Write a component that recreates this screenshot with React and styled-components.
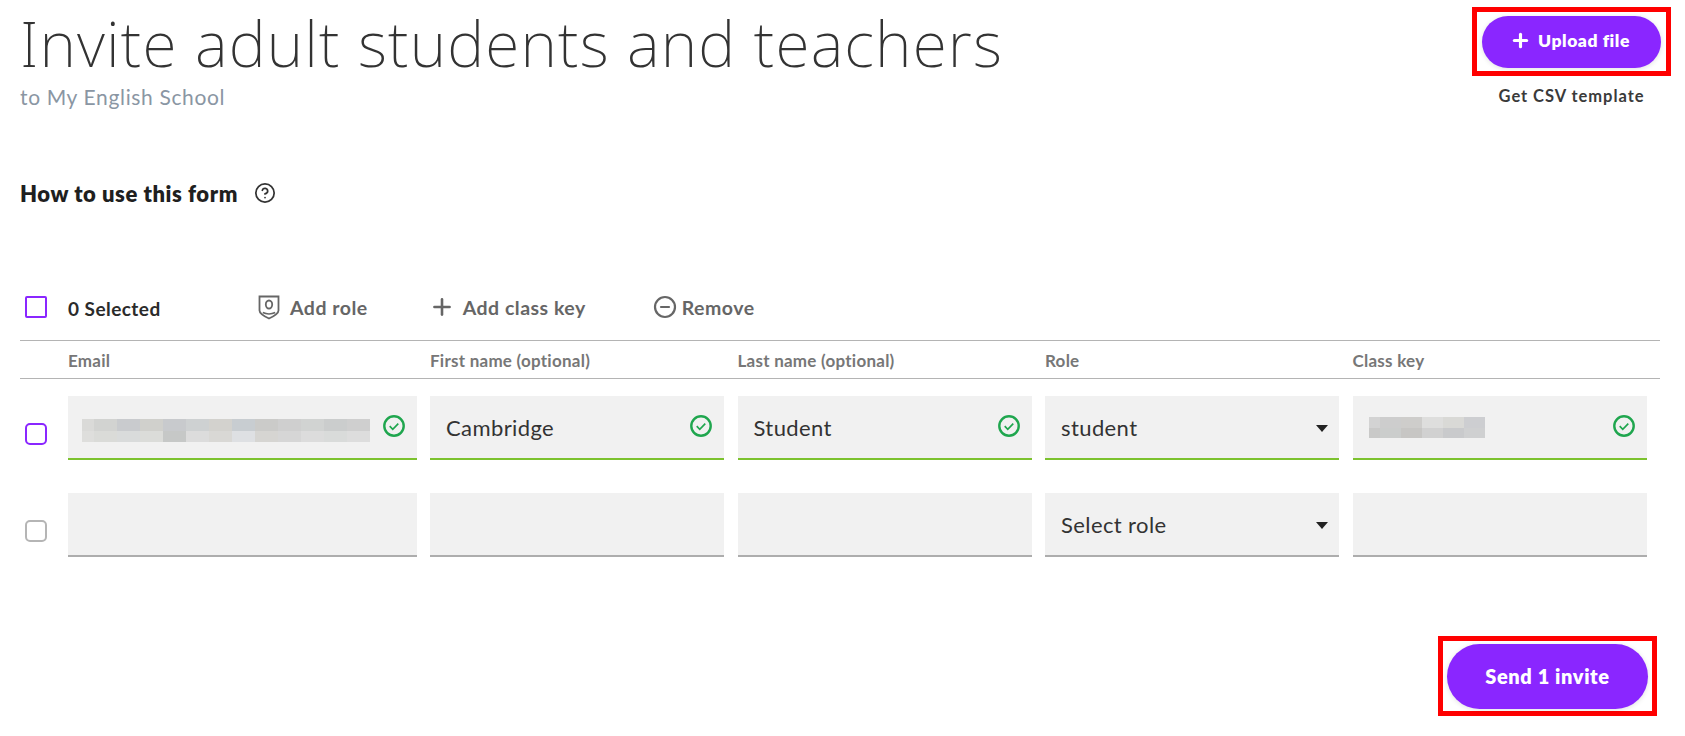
import React from "react";
import styled, { createGlobalStyle } from "styled-components";
import { Plus, CircleMinus, CircleHelp } from "lucide-react";

const Global = createGlobalStyle`
  html, body { margin: 0; background: #fff; }
  body { font-family: "Lato", "Noto Sans", sans-serif; color: #333; }
  * { box-sizing: border-box; }
`;

const Page = styled.div`
  width: 1685px;
  height: 736px;
  overflow: hidden;
  padding: 7px 14px 0 20px;
`;
const Header = styled.header`
  display: flex;
  justify-content: space-between;
  align-items: flex-start;
`;
const Title = styled.h1`
  margin: 0;
  font-family: "Noto Sans", sans-serif;
  font-weight: 200;
  font-size: 62.5px;
  line-height: 72px;
  letter-spacing: 1.15px;
  color: #333;
  white-space: nowrap;
`;
const Subtitle = styled.div`
  margin-top: 4px;
  font-size: 21px;
  line-height: 28px;
  letter-spacing: 0.65px;
  color: #8a96a3;
`;
const UploadColumn = styled.div`
  display: flex;
  flex-direction: column;
  align-items: center;
`;
const Annotation = styled.div`
  border: 5px solid #ff0000;
  padding: ${p => p.$padding};
  display: flex;
`;
const PrimaryButton = styled.button`
  display: flex;
  align-items: center;
  justify-content: center;
  width: ${p => p.$w}px;
  height: ${p => p.$h}px;
  padding: 0 ${p => p.$nudge}px ${p => p.$lift}px 0;
  border: 0;
  border-radius: 34px;
  background: #8a26ff;
  color: #fff;
  font-family: inherit;
  font-weight: 800;
  font-size: ${p => p.$size}px;
  letter-spacing: ${p => p.$spacing}px;
  gap: 7px;
  box-shadow: 0 1px 5px rgba(0, 0, 0, 0.12);
`;
const TemplateLink = styled.a`
  margin-top: 8px;
  font-size: 16.5px;
  line-height: 24px;
  font-weight: 700;
  letter-spacing: 0.95px;
  color: #3a3a3a;
`;
const HelpRow = styled.div`
  display: flex;
  align-items: center;
  gap: 16px;
  margin-top: 71px;
  height: 22px;
  font-size: 22px;
  font-weight: 800;
  letter-spacing: 0.55px;
  color: #1f1f1f;
`;
const Toolbar = styled.div`
  display: flex;
  align-items: center;
  height: 53px;
  margin-top: 83px;
  padding: 0 0 13px 5px;
`;
const SelectedLabel = styled.span`
  width: 190px;
  padding-top: 2px;
  font-size: 19px;
  font-weight: 700;
  letter-spacing: 0.45px;
  color: #2b2b2b;
`;
const ToolButton = styled.button`
  display: flex;
  align-items: center;
  gap: ${p => p.$gap}px;
  margin-right: ${p => p.$after}px;
  padding: 0;
  border: 0;
  background: none;
  font-family: inherit;
  font-size: 19.5px;
  font-weight: 700;
  letter-spacing: 0.5px;
  color: #666;
`;
const Table = styled.div`
  margin-right: 11px;
`;
const ColumnGrid = styled.div`
  display: grid;
  grid-template-columns: 348.5px repeat(4, 294px);
  column-gap: 13.5px;
`;
const HeaderRow = styled(ColumnGrid)`
  height: 39px;
  align-items: center;
  padding: 2px 0 0 48px;
  border-top: 1px solid #b4b4b4;
  border-bottom: 1px solid #b4b4b4;
  font-size: 17px;
  font-weight: 700;
  letter-spacing: 0.25px;
  color: #777;
`;
const Row = styled.div`
  display: flex;
  align-items: center;
  margin-top: ${p => p.$top}px;
  padding-left: 5px;
`;
const Checkbox = styled.span`
  display: block;
  flex: none;
  width: 22px;
  height: 22px;
  margin-right: 21px;
  margin-top: ${p => p.$offset}px;
  border: 2px solid ${p => (p.$off ? "#b5b5b5" : "#8a26ff")};
  border-radius: ${p => p.$radius}px;
`;
const Field = styled.div`
  display: flex;
  align-items: center;
  justify-content: space-between;
  height: 64px;
  padding: 0 11px 0 16px;
  background: #f1f1f1;
  border-bottom: 2px solid ${p => (p.$valid ? "#7cc22e" : "#adadad")};
  font-size: 22px;
  letter-spacing: 0.4px;
  color: #333;
`;
const Mosaic = styled.div`
  display: grid;
  grid-template-columns: ${p => p.$columns};
  grid-template-rows: 1fr 1fr;
  width: ${p => p.$w}px;
  height: ${p => p.$h}px;
  margin: ${p => p.$top}px 0 0 ${p => p.$left}px;
`;
const Pixel = styled.i`
  display: block;
  background: ${p => p.$c};
`;
const Caret = styled.span`
  display: block;
  width: 0;
  height: 0;
  margin-top: 2px;
  border-left: 6.5px solid transparent;
  border-right: 6.5px solid transparent;
  border-top: 7px solid #222;
`;
const CheckIcon = styled.svg`
  flex: none;
  width: 24px;
  height: 24px;
  margin-top: -2px;
`;
const Footer = styled.div`
  display: flex;
  justify-content: flex-end;
  margin: 79px 14px 0 0;
`;

const Valid = () => (
  <CheckIcon viewBox="0 0 23 23" fill="none" aria-hidden="true">
    <circle cx="11.5" cy="11.5" r="9.3" stroke="#1fa64e" strokeWidth="2.3" />
    <path d="M7.4 11.7l2.9 2.9 5.3-5.4" stroke="#1fa64e" strokeWidth="1.6" />
  </CheckIcon>
);

const Shield = () => (
  <svg width="22" height="25" viewBox="0 0 22 25" fill="none" stroke="#666" strokeWidth="1.8" aria-hidden="true">
    <path d="M1.5 1.5h19v14c0 3.4-5.2 6-9.5 8-4.3-2-9.5-4.6-9.5-8z" />
    <ellipse cx="11" cy="9.5" rx="3.2" ry="4" />
    <path d="M4.8 17.5c3.5 1.8 8.9 1.8 12.4 0" />
  </svg>
);

const emailTop = ["#dadad8","#d2d3d1","#c9cbce","#d0d0cc","#c8cacd","#ced1d2","#d3d2ce","#c8cdd1","#cbcbc9","#cfcfcf","#d1d3d2","#cbcdcd","#cfcfcf"];
const emailBottom = ["#dededc","#dadbd8","#d9dbdb","#dbdcd9","#c6c8c7","#dcdcdc","#d9d8d5","#dee0e3","#d6d5d2","#d6d6d6","#dcdcdc","#d9dbda","#dddddd"];
const keyTop = ["#d3d3d3","#cdcdcd","#cecdcb","#dededd","#d9d9d6","#cdced1"];
const keyBottom = ["#c9c9c8","#cbcdcc","#c7c6c4","#d1d1d1","#c9cacc","#cfd0d1"];

export default function App() {
  return (
    <Page>
      <Global />
      <Header>
        <div>
          <Title>Invite adult students and teachers</Title>
          <Subtitle>to My English School</Subtitle>
        </div>
        <UploadColumn>
          <Annotation $padding="4px 5px 3px">
            <PrimaryButton $w={179} $h={52} $size={17.5} $spacing={0.55} $lift={3} $nudge={3}>
              <Plus size={21} strokeWidth={3.6} />
              Upload file
            </PrimaryButton>
          </Annotation>
          <TemplateLink>Get CSV template</TemplateLink>
        </UploadColumn>
      </Header>

      <HelpRow>
        How to use this form
        <CircleHelp size={22} strokeWidth={1.9} color="#333" />
      </HelpRow>

      <Toolbar>
        <Checkbox $radius={2} $offset={0} />
        <SelectedLabel>0 Selected</SelectedLabel>
        <ToolButton $gap={10} $after={61}><Shield />Add role</ToolButton>
        <ToolButton $gap={8} $after={67}><Plus size={26} strokeWidth={2.4} />Add class key</ToolButton>
        <ToolButton $gap={5}><CircleMinus size={24} strokeWidth={2.2} />Remove</ToolButton>
      </Toolbar>

      <Table>
        <HeaderRow>
          <span>Email</span>
          <span>First name (optional)</span>
          <span>Last name (optional)</span>
          <span>Role</span>
          <span>Class key</span>
        </HeaderRow>

        <Row $top={17}>
          <Checkbox $radius={5} $offset={12} />
          <ColumnGrid>
            <Field $valid>
              <Mosaic $columns="12px repeat(12, 23px)" $w={288} $h={23} $left={-2} $top={7}>
                {emailTop.map((c, i) => <Pixel key={`t${i}`} $c={c} />)}
                {emailBottom.map((c, i) => <Pixel key={`b${i}`} $c={c} />)}
              </Mosaic>
              <Valid />
            </Field>
            <Field $valid>Cambridge<Valid /></Field>
            <Field $valid>Student<Valid /></Field>
            <Field $valid>student<Caret /></Field>
            <Field $valid>
              <Mosaic $columns="11px repeat(5, 21px)" $w={116} $h={21} $left={0} $top={1}>
                {keyTop.map((c, i) => <Pixel key={`t${i}`} $c={c} />)}
                {keyBottom.map((c, i) => <Pixel key={`b${i}`} $c={c} />)}
              </Mosaic>
              <Valid />
            </Field>
          </ColumnGrid>
        </Row>

        <Row $top={33}>
          <Checkbox $off $radius={5} $offset={11} />
          <ColumnGrid>
            <Field />
            <Field />
            <Field />
            <Field>Select role<Caret /></Field>
            <Field />
          </ColumnGrid>
        </Row>
      </Table>

      <Footer>
        <Annotation $padding="3px 4px 2px">
          <PrimaryButton $w={201} $h={65} $size={20} $spacing={0.6} $lift={2} $nudge={0}>Send 1 invite</PrimaryButton>
        </Annotation>
      </Footer>
    </Page>
  );
}
